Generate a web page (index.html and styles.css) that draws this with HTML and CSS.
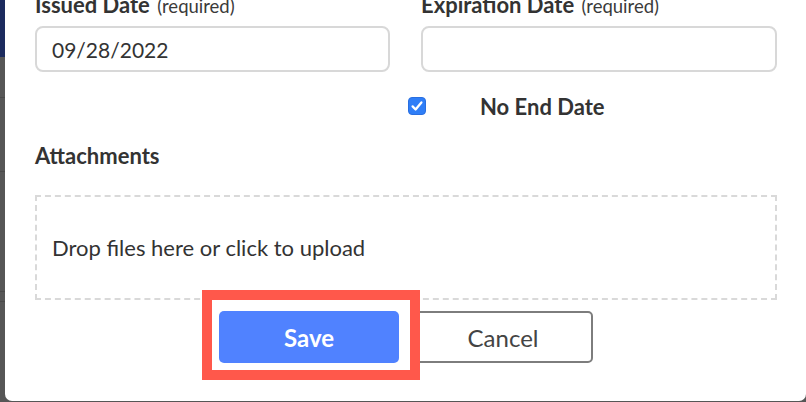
FILE: index.html
```html
<!DOCTYPE html>
<html lang="en">
<head>
    <meta charset="UTF-8">
    <meta name="viewport" content="width=device-width, initial-scale=1.0">
    <title>Edit Certification</title>
    <link rel="stylesheet" href="styles.css">
</head>
<body>
    <div class="page">
        <!-- page behind the modal, only a sliver shows -->
        <div class="backdrop">
            <div class="backdrop-nav"></div>
            <div class="backdrop-row row-a"></div>
            <div class="backdrop-row row-b"></div>
            <div class="backdrop-row row-c"></div>
            <div class="backdrop-row row-d"></div>
        </div>

        <div class="modal">
            <form class="cert-form">
                <div class="date-fields">
                    <div class="field">
                        <label class="field-label" for="issuedDate">Issued Date <span class="hint">(required)</span></label>
                        <input type="text" id="issuedDate" class="text-input" value="09/28/2022">
                    </div>
                    <div class="field">
                        <label class="field-label" for="expirationDate">Expiration Date <span class="hint">(required)</span></label>
                        <input type="text" id="expirationDate" class="text-input" value="">
                    </div>
                </div>

                <div class="no-end-row">
                    <span class="checkbox">
                        <svg width="18" height="18" viewBox="0 0 18 18">
                            <rect x="0.5" y="0.5" width="17" height="17" rx="3.5" fill="#2f7ef7" stroke="#2a6fe0"/>
                            <path d="M4.6 9.4l3 3.1 5.8-7" fill="none" stroke="#fff" stroke-width="2.3" stroke-linecap="round" stroke-linejoin="round"/>
                        </svg>
                    </span>
                    <span class="no-end-label">No End Date</span>
                </div>

                <div class="section-label">Attachments</div>
                <div class="dropzone">Drop files here or click to upload</div>

                <div class="actions">
                    <button type="button" class="btn btn-save">Save</button>
                    <button type="button" class="btn btn-cancel">Cancel</button>
                    <!-- annotation box drawn over the save button -->
                    <div class="highlight"></div>
                </div>
            </form>
        </div>
    </div>
</body>
</html>
```

FILE: styles.css
```css
body {
    margin: 0;
    padding: 0;
    font-family: Lato, "Open Sans", Arial, sans-serif;
    color: #333;
    background-color: #565656;
    overflow: hidden;
}

.page {
    display: flex;
    width: 806px;
    height: 402px;
    overflow: hidden;
}

.backdrop {
    width: 5px;
    flex-shrink: 0;
    display: flex;
    flex-direction: column;
    background-color: #565656;
}

.backdrop-nav {
    height: 57px;
    background-color: #1c2b5e;
}

.backdrop-row {
    height: 1px;
    background-color: #494949;
}

.row-a { margin-top: 40px; }
.row-b { margin-top: 73px; }
.row-c { margin-top: 119px; }
.row-d { margin-top: 9px; }

.modal {
    width: 801px;
    height: 401px;
    flex-shrink: 0;
    box-sizing: border-box;
    padding: 0 29px 0 30px;
    background-color: #fff;
    border-radius: 0 0 7px 7px;
    overflow: hidden;
}

.cert-form {
    margin-top: -7px;
    width: 742px;
}

.date-fields {
    display: grid;
    grid-template-columns: 355px 356px;
    column-gap: 31px;
}

.field {
    display: flex;
    flex-direction: column;
    gap: 8px;
}

.field-label {
    font-size: 22px;
    line-height: 24px;
    font-weight: bold;
    color: #333;
}

.hint {
    font-size: 18.5px;
    font-weight: normal;
    color: #3a3a3a;
    margin-left: 2px;
}

.text-input {
    height: 46px;
    box-sizing: border-box;
    padding: 0 15px;
    border: 2px solid #d8d8d8;
    border-radius: 8px;
    font-family: Lato, Arial, sans-serif;
    font-size: 21px;
    color: #333;
    background-color: #fff;
    outline: none;
}

.no-end-row {
    display: flex;
    align-items: center;
    gap: 54px;
    height: 24px;
    margin-top: 22px;
    padding-left: 373px;
}

.checkbox {
    display: flex;
    width: 18px;
    height: 18px;
}

.no-end-label {
    font-size: 22px;
    font-weight: bold;
    color: #333;
}

.section-label {
    margin-top: 26px;
    font-size: 22px;
    line-height: 24px;
    font-weight: bold;
    color: #333;
}

.dropzone {
    display: flex;
    align-items: center;
    height: 105px;
    box-sizing: border-box;
    margin-top: 27px;
    padding-left: 15px;
    border: 2px dashed #d9d9d9;
    font-size: 22px;
    color: #333;
}

.actions {
    position: relative;
    display: flex;
    justify-content: center;
    gap: 14px;
    margin-top: 11px;
}

.btn {
    width: 180px;
    height: 52px;
    box-sizing: border-box;
    border-radius: 5px;
    font-family: Lato, Arial, sans-serif;
    font-size: 24px;
    cursor: pointer;
}

.btn-save {
    border: none;
    background-color: #5082ff;
    color: #fff;
    font-weight: bold;
}

.btn-cancel {
    border: 2px solid #7d7d7d;
    background-color: #fff;
    color: #444;
}

.highlight {
    position: absolute;
    left: 167px;
    top: -21px;
    width: 218px;
    height: 90px;
    box-sizing: border-box;
    border: 10px solid #ff584b;
}
```
